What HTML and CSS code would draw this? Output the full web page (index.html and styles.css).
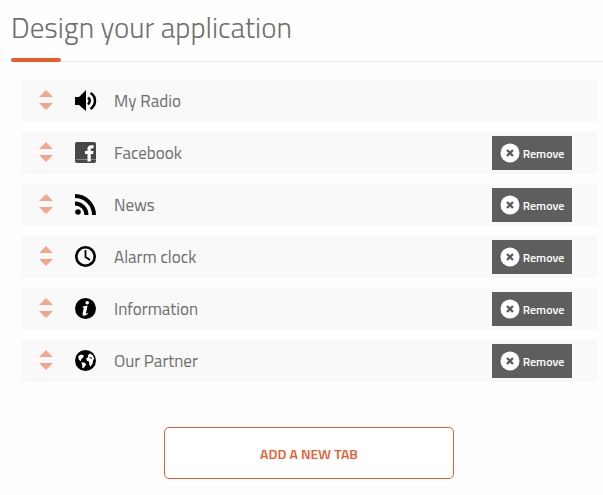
FILE: index.html
```html
<!DOCTYPE html>
<html lang="en">
	<head>
		<meta charset="utf-8">
		<title>Design your application</title>
		<link rel="stylesheet" href="styles.css">
	</head>
	<body>

		<!-- shared icons -->
		<svg class="sprite" aria-hidden="true">
			<symbol id="sort" viewBox="0 0 14 22">
				<path d="M7 0l7 7H0zM0 13h14l-7 7z" />
			</symbol>
			<symbol id="cross" viewBox="0 0 20 20">
				<circle cx="10" cy="10" r="9.5" fill="#fff" />
				<path d="M7 7l6 6M13 7l-6 6" stroke="#5e5e5e" stroke-width="2.4" />
			</symbol>
		</svg>

		<main class="designer">
			<h1 class="title">Design your application</h1>

			<ul class="tabList">
				<li class="tabItem">
					<svg class="sortIcon"><use href="#sort" /></svg>
					<svg class="tabIcon" viewBox="0 0 22 22">
						<path d="M0 7h4l7-7v21l-7-6H0z" />
						<path d="M13 7.500q3.500 3.200 0 7M15.500 3c6 3.500 6 12 0 16" fill="none" stroke="#000" stroke-width="2.500" />
					</svg>
					<span class="tabName">My Radio</span>
				</li>
				<li class="tabItem">
					<svg class="sortIcon"><use href="#sort" /></svg>
					<svg class="tabIcon" viewBox="0 0 22 22">
						<rect width="21" height="21" rx="2" fill="#484848" />
						<path d="M1 17.500h20" stroke="#858585" />
						<path d="M12.500 19.500V12H10V9h2.500V7c0-3 1.500-4 6-3.700v2.900c-2.200-.1-2.700.2-2.700 1.500V9h2.700l-.4 3h-2.300v7.500z" fill="#fff" />
					</svg>
					<span class="tabName">Facebook</span>
					<button type="button" class="removeBtn"><svg class="crossIcon"><use href="#cross" /></svg>Remove</button>
				</li>
				<li class="tabItem">
					<svg class="sortIcon"><use href="#sort" /></svg>
					<svg class="tabIcon" viewBox="0 0 22 22">
						<circle cx="3" cy="18" r="2.800" />
						<path d="M0 9.500A11.500 11.500 0 0 1 11.500 21M0 2a19 19 0 0 1 19 19" fill="none" stroke="#000" stroke-width="4" />
					</svg>
					<span class="tabName">News</span>
					<button type="button" class="removeBtn"><svg class="crossIcon"><use href="#cross" /></svg>Remove</button>
				</li>
				<li class="tabItem">
					<svg class="sortIcon"><use href="#sort" /></svg>
					<svg class="tabIcon" viewBox="0 0 22 22">
						<circle cx="10.500" cy="10.500" r="9.200" fill="none" stroke="#000" stroke-width="2.600" />
						<path d="M10.500 4v7l4.500 3" fill="none" stroke="#000" stroke-width="1.800" />
					</svg>
					<span class="tabName">Alarm clock</span>
					<button type="button" class="removeBtn"><svg class="crossIcon"><use href="#cross" /></svg>Remove</button>
				</li>
				<li class="tabItem">
					<svg class="sortIcon"><use href="#sort" /></svg>
					<svg class="tabIcon" viewBox="0 0 22 22">
						<circle cx="10.500" cy="10.500" r="10.500" />
						<circle cx="12.200" cy="4.800" r="1.800" fill="#fff" />
						<path d="M7.800 8.500l4.700-1-1.600 7.900q.4.700 1.800-.6l.4.600q-2 2.500-4.600 2.300-1.400-.2-1-2l1.300-5.800-1.100-.3z" fill="#fff" />
					</svg>
					<span class="tabName">Information</span>
					<button type="button" class="removeBtn"><svg class="crossIcon"><use href="#cross" /></svg>Remove</button>
				</li>
				<li class="tabItem">
					<svg class="sortIcon"><use href="#sort" /></svg>
					<svg class="tabIcon" viewBox="0 0 22 22">
						<circle cx="10.500" cy="10.500" r="10.500" />
						<path d="M3.300 6l3-1.500 2.600 1-.8 2-1.800 1.800-.6 2-2-1.800zM6.500 12.200l2.700.3 1.900 1.700-1 2-1.700 2-1-.3-.2-3zM13 5l2.300-1.400 2.500 1.600 1.400 3.500-1 1.300-.6 3.700-2.200 3-1-2-.4-3.200-2.200-.8-.6-2.200 2-1.500z" fill="#fff" />
						<path d="M14.500 7.500l2.500 1" stroke="#000" />
					</svg>
					<span class="tabName">Our Partner</span>
					<button type="button" class="removeBtn"><svg class="crossIcon"><use href="#cross" /></svg>Remove</button>
				</li>
			</ul>

			<div class="actions">
				<button type="button" class="addBtn">ADD A NEW TAB</button>
			</div>
		</main>

	</body>
</html>
```
FILE: styles.css
```css
* {
	margin: 0;
	padding: 0;
	box-sizing: border-box;
	list-style: none;
}

body {
	font-family: "Titillium Web", Roboto, sans-serif;
	color: #6e6e6e;
	background: #fefefe;
}

.sprite {
	display: none;
}

.designer {
	padding-left: 11px;
}

.title {
	position: relative;
	height: 62px;
	padding-top: 7px;
	font-size: 29px;
	font-weight: 300;
	line-height: 40px;
	border-bottom: 1px solid #ebebeb;
}

/* accent under the title */
.title::after {
	content: "";
	position: absolute;
	left: 0;
	bottom: -1px;
	width: 50px;
	height: 4px;
	border-radius: 2px;
	background: #ed5a2b;
}

.tabList {
	display: flex;
	flex-direction: column;
	gap: 10px;
	padding: 18px 6px 0 10px;
}

.tabItem {
	display: flex;
	align-items: center;
	height: 42px;
	padding: 0 25px 0 18px;
	background: #f9f9f9;
}

.sortIcon {
	width: 14px;
	height: 22px;
	margin-right: 22px;
	fill: #f2a78c;
	cursor: pointer;
}

.tabIcon {
	width: 22px;
	height: 22px;
	margin-right: 17px;
}

.tabName {
	flex: 1;
	font-size: 17px;
	line-height: 24px;
}

.removeBtn {
	display: flex;
	align-items: center;
	justify-content: center;
	gap: 3px;
	width: 80px;
	height: 34px;
	border: 0;
	font-family: inherit;
	font-size: 12px;
	font-weight: 600;
	color: #fff;
	background: #5e5e5e;
	cursor: pointer;
}

.crossIcon {
	width: 20px;
	height: 20px;
}

.actions {
	padding: 45px 6px 16px 10px;
	text-align: center;
}

.addBtn {
	width: 290px;
	max-width: 100%;
	height: 52px;
	border: 1px solid #ed5a2b;
	border-radius: 5px;
	font-family: inherit;
	font-size: 14px;
	font-weight: 600;
	color: #ed5a2b;
	background: #fff;
	cursor: pointer;
}
```
